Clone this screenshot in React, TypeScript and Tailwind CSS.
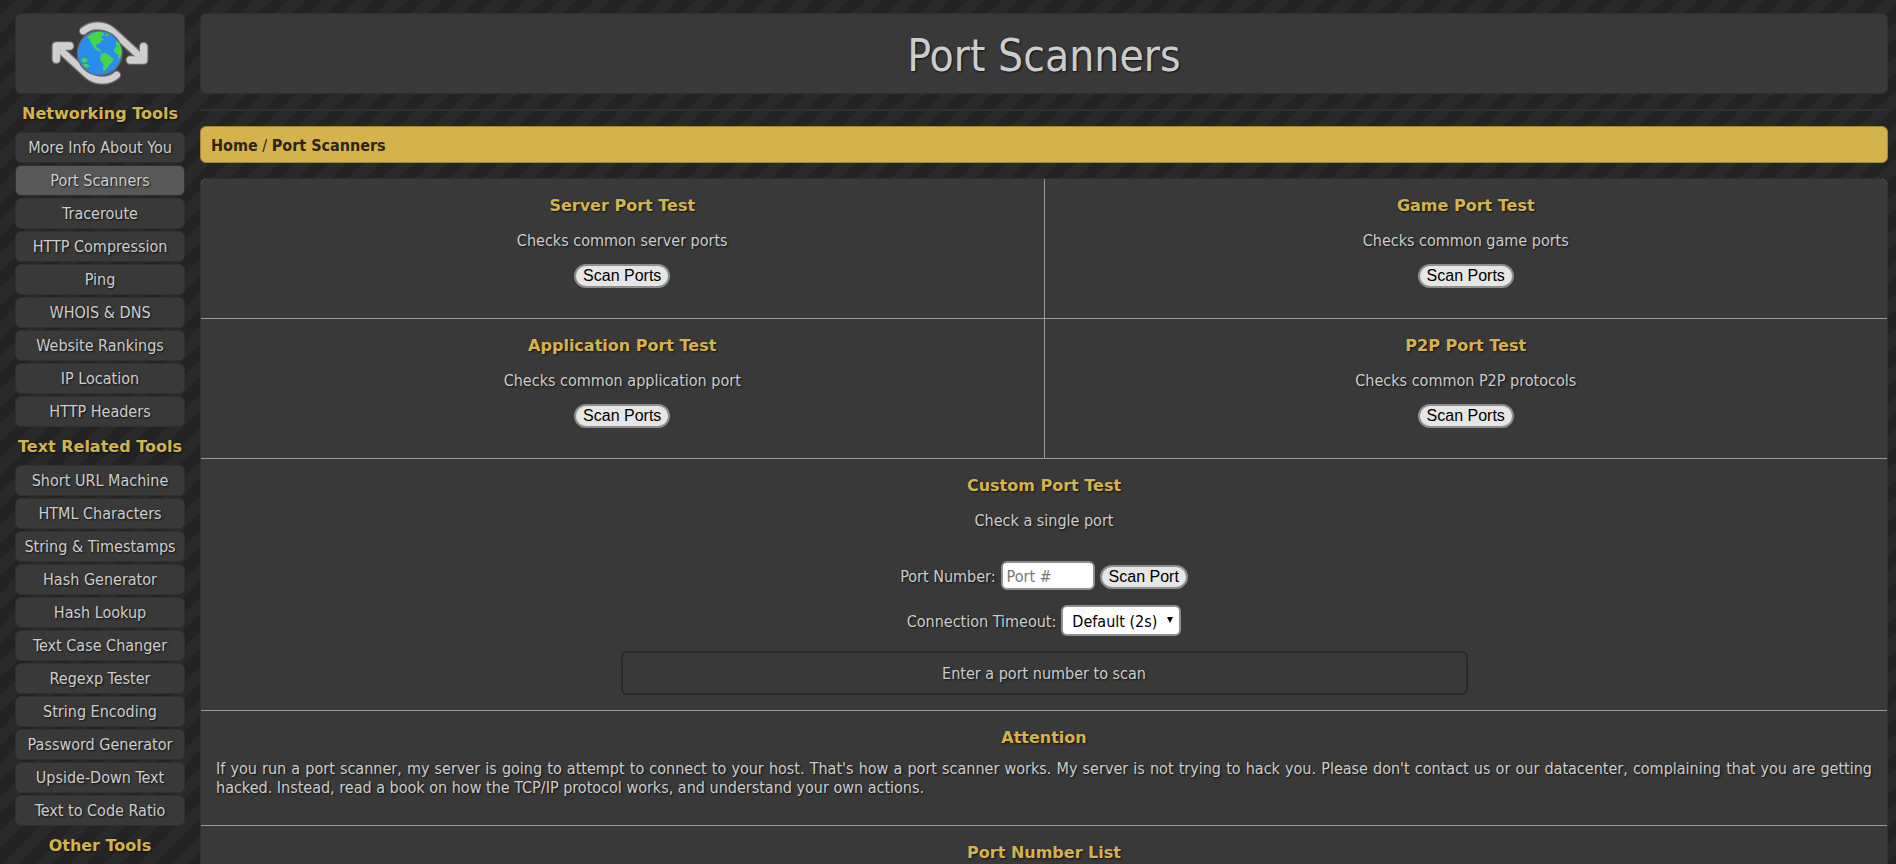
import type { ReactNode } from "react";

interface ToolGroup {
  title: string;
  items: string[];
}

const GROUPS: ToolGroup[] = [
  {
    title: "Networking Tools",
    items: [
      "More Info About You",
      "Port Scanners",
      "Traceroute",
      "HTTP Compression",
      "Ping",
      "WHOIS & DNS",
      "Website Rankings",
      "IP Location",
      "HTTP Headers",
    ],
  },
  {
    title: "Text Related Tools",
    items: [
      "Short URL Machine",
      "HTML Characters",
      "String & Timestamps",
      "Hash Generator",
      "Hash Lookup",
      "Text Case Changer",
      "Regexp Tester",
      "String Encoding",
      "Password Generator",
      "Upside-Down Text",
      "Text to Code Ratio",
    ],
  },
  { title: "Other Tools", items: [""] },
];

const TESTS = [
  { title: "Server Port Test", text: "Checks common server ports" },
  { title: "Game Port Test", text: "Checks common game ports" },
  { title: "Application Port Test", text: "Checks common application port" },
  { title: "P2P Port Test", text: "Checks common P2P protocols" },
];

const ACTIVE = "Port Scanners";

function Arrow() {
  return (
    <>
      <path d="M115 54C140 32 180 34 204 56L272 118" fill="none" stroke="#6e6e6e" strokeWidth="27" strokeLinecap="round" />
      <path d="M296 101V141H256" fill="none" stroke="#6e6e6e" strokeWidth="29" strokeLinejoin="round" strokeLinecap="round" />
      <path d="M115 54C140 32 180 34 204 56L276 122" fill="none" stroke="#cfcfcf" strokeWidth="20" strokeLinecap="round" />
      <path d="M296 101V141H256" fill="none" stroke="#cfcfcf" strokeWidth="22" strokeLinejoin="round" strokeLinecap="round" />
    </>
  );
}

function Logo() {
  return (
    <svg viewBox="0 0 330 240" className="h-20 w-[110px]" aria-label="Home" role="img">
      <Arrow />
      <g transform="rotate(180 165 120)">
        <Arrow />
      </g>
      <circle cx="164" cy="120" r="67" fill="#2a8cec" stroke="#666" strokeWidth="4" />
      <g fill="#45d54a">
        <path d="M126 74L140 61L160 56L176 59L179 70L172 66L168 73L177 80L168 84L164 92L155 93L153 101L160 106L170 116L165 117L150 108L142 96L136 86L134 77Z" />
        <path d="M182 62L192 63L188 69L182 68Z" />
        <path d="M167 124L178 119L190 124L196 131L206 137L202 148L193 155L186 166L178 174L174 172L175 153L165 140Z" />
        <path d="M223 90L214 84L211 95L217 99L209 104L207 115L213 122L220 123L219 134L224 138L229 125L230 110Z" />
        <path d="M109 140L117 134L126 137L127 145L119 149L111 147Z" />
        <path d="M114 153L126 153L136 160L128 163L119 161Z" />
      </g>
    </svg>
  );
}

function Heading({ children }: { children: ReactNode }) {
  return <h2 className="font-['DejaVu_Sans',sans-serif] text-base leading-6 font-bold text-[#d4b24c]">{children}</h2>;
}

function ScanButton({ children }: { children: ReactNode }) {
  return (
    <button
      type="button"
      className="h-6 rounded-full border-2 border-[#8e8e8e] bg-[#e6e6e6] px-[7px] font-['Liberation_Sans',sans-serif] text-base leading-5 text-black"
    >
      {children}
    </button>
  );
}

function Sidebar() {
  return (
    <nav className="w-[170px] shrink-0 text-center">
      <a
        href="#"
        className="flex h-[81px] items-center justify-center rounded-md border border-[#303030] bg-[#393939] pb-0.5"
      >
        <Logo />
      </a>
      {GROUPS.map((group) => (
        <section key={group.title}>
          <h2 className="pt-0.5 font-['DejaVu_Sans',sans-serif] text-base leading-9 font-bold whitespace-nowrap text-[#d4b24c]">
            {group.title}
          </h2>
          <ul className="flex flex-col gap-0.5">
            {group.items.map((item) => (
              <li key={item}>
                <a
                  href="#"
                  className={`block h-[31px] rounded-md border border-[#303030] leading-[29px] whitespace-nowrap ${
                    item === ACTIVE ? "bg-[#585858]" : "bg-[#393939]"
                  }`}
                >
                  {item}
                </a>
              </li>
            ))}
          </ul>
        </section>
      ))}
    </nav>
  );
}

function CustomTest() {
  return (
    <section className="flex flex-col items-center border-t border-[#999] py-[15px]">
      <Heading>Custom Port Test</Heading>
      <p className="mt-[11px] leading-6">Check a single port</p>
      <form className="mt-7 flex w-full flex-col items-center gap-[15px]">
        <div className="flex h-[29px] items-baseline gap-[5px]">
          <label htmlFor="port">Port Number:</label>
          <input
            id="port"
            placeholder="Port #"
            className="h-[29px] w-[94px] rounded-md border-2 border-[#8e8e8e] bg-white px-1 pt-0.5 text-black placeholder:text-[#777]"
          />
          <ScanButton>Scan Port</ScanButton>
        </div>
        <div className="flex items-baseline gap-[5px]">
          <label htmlFor="timeout">Connection Timeout:</label>
          <div className="relative">
            <select
              id="timeout"
              className="block h-[31px] w-[120px] appearance-none rounded-md border-2 border-[#8e8e8e] bg-white pt-0.5 pl-[9px] text-black"
            >
              <option>Default (2s)</option>
            </select>
            <svg viewBox="0 0 6 6" className="pointer-events-none absolute top-3 right-2 size-1.5">
              <path d="M0 0H6L3 6Z" fill="#000" />
            </svg>
          </div>
        </div>
        <output className="box-content block w-1/2 rounded-md border-2 border-[#282828] pt-0.5 text-center leading-[38px]">
          Enter a port number to scan
        </output>
      </form>
    </section>
  );
}

export default function App() {
  return (
    <div className="flex h-screen gap-[15px] overflow-hidden bg-[repeating-linear-gradient(135deg,#232323_0_12px,#292929_12px_24px)] pt-[13px] pr-2 pl-[15px] font-['DejaVu_Sans_Condensed','DejaVu_Sans',sans-serif] text-base text-[#ccc] [text-shadow:1px_1px_2px_#111] [&_button]:[text-shadow:none] [&_input]:[text-shadow:none] [&_select]:[text-shadow:none]">
      <Sidebar />
      <main className="min-w-0 flex-1">
        <h1 className="rounded-md border border-[#303030] bg-[#393939] pt-1 text-center text-[44px] leading-[75px]">
          Port Scanners
        </h1>
        <hr className="my-[15px] border-t-2 border-[#303030]" />
        <div className="rounded-md border border-[#a08636] bg-[#d4b24c] px-[10px] pt-0.5 leading-[33px] text-[#2b2716] [text-shadow:none]">
          <a href="#" className="font-bold">
            Home
          </a>{" "}
          / <b>Port Scanners</b>
        </div>
        <div className="mt-[15px] rounded-md border border-[#303030] bg-[#393939]">
          <div className="grid grid-cols-2 gap-px overflow-hidden rounded-t-md bg-[#999] text-center">
            {TESTS.map((test) => (
              <section key={test.title} className="bg-[#393939] pt-[15px] pb-[30px]">
                <Heading>{test.title}</Heading>
                <p className="my-[11px] leading-6">{test.text}</p>
                <div className="flex justify-center">
                  <ScanButton>Scan Ports</ScanButton>
                </div>
              </section>
            ))}
          </div>
          <CustomTest />
          <section className="border-t border-[#999] px-[15px] pt-[15px] pb-7 text-center">
            <Heading>Attention</Heading>
            <p className="mt-[9px] text-justify leading-[19px]">
              If you run a port scanner, my server is going to attempt to connect to your host. That's how a port
              scanner works. My server is not trying to hack you. Please don't contact us or our datacenter,
              complaining that you are getting hacked. Instead, read a book on how the TCP/IP protocol works, and
              understand your own actions.
            </p>
          </section>
          <section className="border-t border-[#999] pt-[15px] pb-7 text-center">
            <Heading>Port Number List</Heading>
          </section>
        </div>
      </main>
    </div>
  );
}
